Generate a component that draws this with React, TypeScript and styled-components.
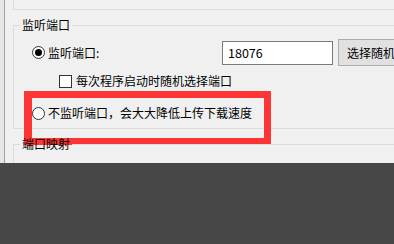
import React from 'react';
import styled, { createGlobalStyle } from 'styled-components';

const GlobalStyle = createGlobalStyle`
  html, body {
    margin: 0;
    padding: 0;
    background: #474747;
  }
  * {
    box-sizing: border-box;
  }
`;

function App() {
  return (
    <>
      <GlobalStyle />
      <Window>
        <Panel>
          <SideStrip />
          <Content>
            <PrevGroupEnd />
            <GroupBox>
              <Legend>监听端口</Legend>
              <GroupBody>
                <PortRow>
                  <RadioOption>
                    <Radio checked />
                    <Label>监听端口:</Label>
                  </RadioOption>
                  <PortInput>18076</PortInput>
                  <Button>选择随机端口</Button>
                </PortRow>
                <CheckRow>
                  <CheckBox />
                  <Label>每次程序启动时随机选择端口</Label>
                </CheckRow>
                <OffRow>
                  <Radio />
                  <Label>不监听端口，会大大降低上传下载速度</Label>
                </OffRow>
              </GroupBody>
              <Highlight />
            </GroupBox>
            <NextGroup>
              <Legend>端口映射</Legend>
            </NextGroup>
          </Content>
        </Panel>
        <Footer />
      </Window>
    </>
  );
}

const Window = styled.div`
  width: 394px;
  height: 244px;
  display: flex;
  flex-direction: column;
  overflow: hidden;
  font-family: "Noto Sans CJK SC", "Noto Sans", sans-serif;
  font-size: 12px;
  color: #000;
`;

const Panel = styled.div`
  height: 163px;
  display: flex;
  background: #f0f0f0;
`;

const SideStrip = styled.div`
  width: 5px;
  flex-shrink: 0;
  background: #e6e6e6;
  border-right: 1px solid #a0a0a0;
`;

const Content = styled.div`
  flex: 1;
  display: flex;
  flex-direction: column;
  overflow: hidden;
  padding-left: 8px;
`;

const PrevGroupEnd = styled.div`
  height: 10px;
  width: 420px;
  flex-shrink: 0;
  border-left: 1px solid #dcdcdc;
  border-bottom: 1px solid #dcdcdc;
`;

const GroupBox = styled.fieldset`
  position: relative;
  width: 420px;
  flex-shrink: 0;
  margin: 8px 0 0 0;
  padding: 7px 0 8px 0;
  border: 1px solid #dcdcdc;
  min-inline-size: 0;
`;

const NextGroup = styled(GroupBox)`
  margin-top: 8px;
  height: 60px;
`;

const Legend = styled.legend`
  margin-left: 6px;
  padding: 0 2px;
  line-height: 14px;
`;

const GroupBody = styled.div`
  padding-left: 18px;
`;

const Label = styled.span`
  line-height: 14px;
  white-space: nowrap;
`;

const PortRow = styled.div`
  display: flex;
  align-items: center;
  height: 27px;
`;

const RadioOption = styled.div`
  display: flex;
  align-items: center;
  gap: 3px;
  width: 190px;
`;

const Radio = styled.span<{ checked?: boolean }>`
  width: 13px;
  height: 13px;
  flex-shrink: 0;
  border-radius: 50%;
  border: 1px solid #333;
  background: #fff;
  display: flex;
  align-items: center;
  justify-content: center;
  &::after {
    content: '';
    width: 7px;
    height: 7px;
    border-radius: 50%;
    background: ${p => (p.checked ? '#000' : 'transparent')};
  }
`;

const PortInput = styled.div`
  width: 111px;
  height: 24px;
  border: 1px solid #7a7a7a;
  background: #fff;
  padding-left: 5px;
  display: flex;
  align-items: center;
  font-size: 12.5px;
`;

const Button = styled.div`
  margin-left: 5px;
  width: 90px;
  height: 27px;
  flex-shrink: 0;
  border: 1px solid #adadad;
  background: #e1e1e1;
  padding-left: 8px;
  display: flex;
  align-items: center;
  white-space: nowrap;
`;

const CheckRow = styled.div`
  display: flex;
  align-items: center;
  gap: 4px;
  margin: 8px 0 0 27px;
  height: 14px;
`;

const CheckBox = styled.span`
  width: 13px;
  height: 13px;
  flex-shrink: 0;
  border: 1px solid #333;
  background: #fff;
`;

const OffRow = styled.div`
  display: flex;
  align-items: center;
  gap: 3px;
  margin-top: 18px;
  height: 14px;
`;

const Highlight = styled.div`
  position: absolute;
  left: 10px;
  top: 59px;
  width: 247px;
  height: 54px;
  border: 7px solid #fe3535;
  border-left-width: 8px;
  pointer-events: none;
`;

const Footer = styled.div`
  flex: 1;
  background: #474747;
`;

export default App;
